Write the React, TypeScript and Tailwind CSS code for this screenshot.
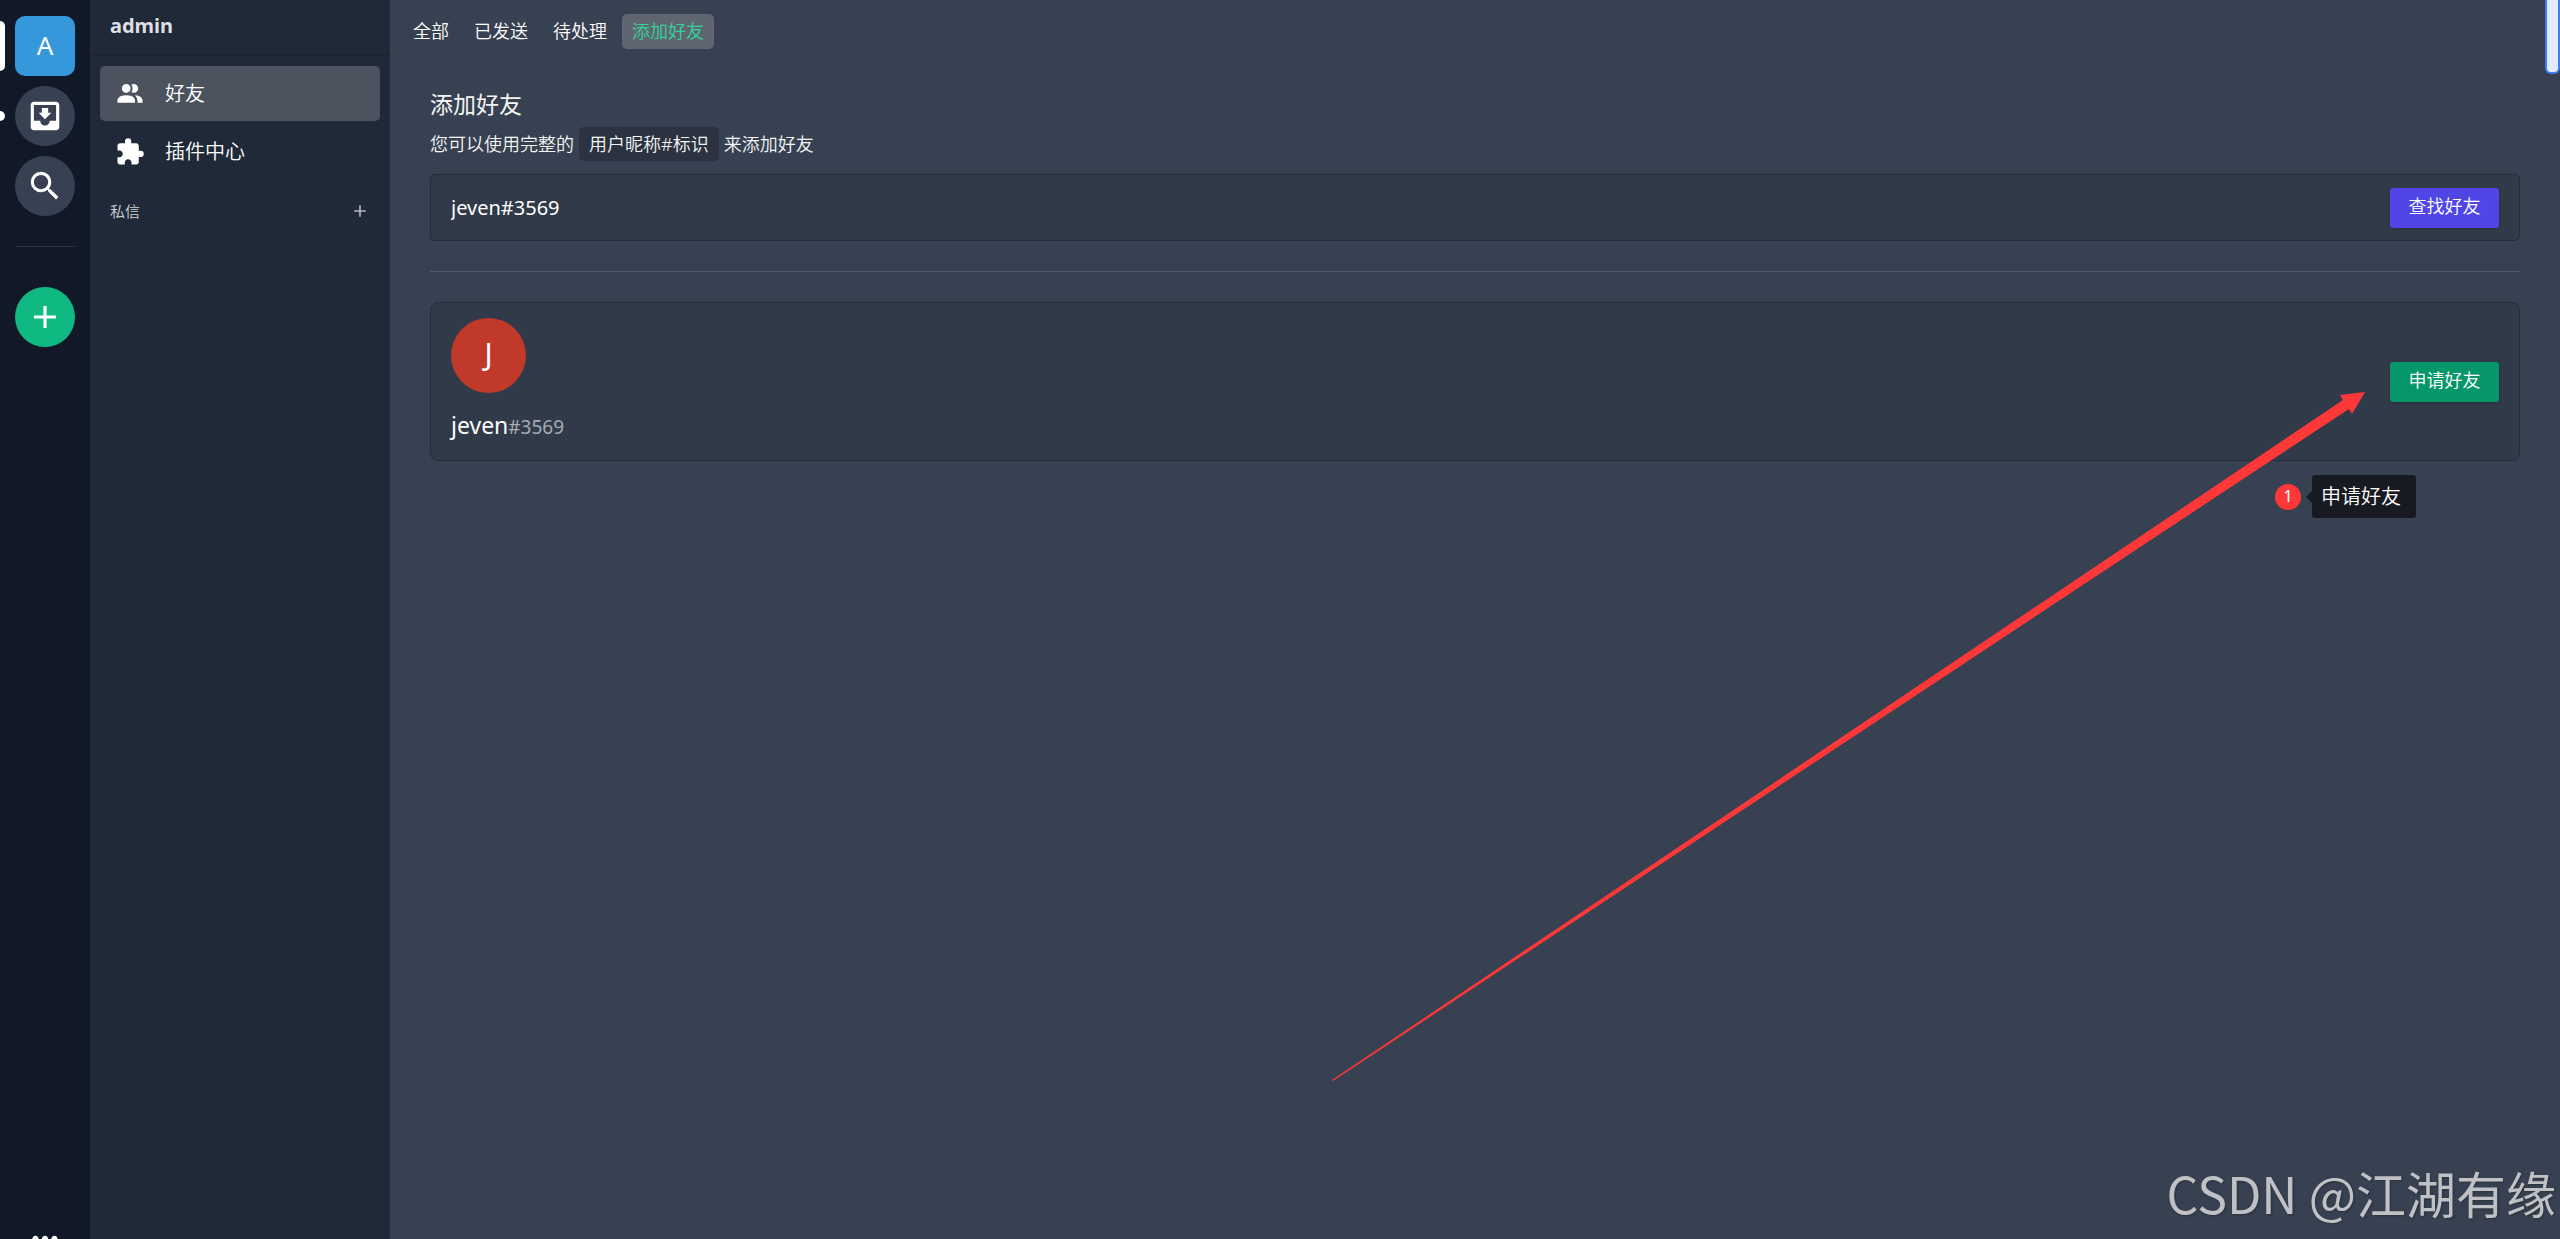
import type { ReactNode } from "react";
import { MdAdd, MdExtension, MdMoreHoriz, MdMoveToInbox } from "react-icons/md";

const font = 'font-["Noto_Sans","Noto_Sans_CJK_SC",sans-serif]';

function PeopleIcon() {
  return (
    <svg viewBox="0 0 24 24" className="size-[30px] shrink-0" fill="currentColor" aria-hidden="true">
      <path d="M16 17v2H2v-2s0-4 7-4 7 4 7 4m-3.5-9.5A3.5 3.5 0 1 0 9 11a3.5 3.5 0 0 0 3.5-3.5m3.44 5.5A5.32 5.32 0 0 1 18 17v2h4v-2s0-3.63-6.06-4M15 4a3.39 3.39 0 0 0-1.93.59 5 5 0 0 1 0 5.82A3.39 3.39 0 0 0 15 11a3.5 3.5 0 0 0 0-7z" />
    </svg>
  );
}

function SearchIcon() {
  return (
    <svg viewBox="0 0 24 24" className="size-[38px]" fill="currentColor" aria-hidden="true">
      <path d="M9.5 3A6.5 6.5 0 0 1 16 9.5c0 1.61-.59 3.09-1.56 4.23l.27.27h.79l5 5-1.5 1.5-5-5v-.79l-.27-.27A6.516 6.516 0 0 1 9.5 16 6.5 6.5 0 0 1 3 9.5 6.5 6.5 0 0 1 9.5 3m0 2C7 5 5 7 5 9.5S7 14 9.5 14 14 12 14 9.5 12 5 9.5 5z" />
    </svg>
  );
}

function RailButton({ label, className, marker, children }: { label: string; className: string; marker?: ReactNode; children: ReactNode }) {
  return (
    <div className="relative flex w-full shrink-0 justify-center">
      {marker}
      <button type="button" aria-label={label} className={`flex size-[60px] items-center justify-center text-white ${className}`}>
        {children}
      </button>
    </div>
  );
}

function Rail() {
  return (
    <nav className="flex w-[90px] shrink-0 flex-col items-center gap-2.5 bg-[#111827] pt-4">
      <RailButton
        label="admin"
        className="rounded-[10px] bg-[#3498db] pb-0.5 text-[26px]"
        marker={<span className="absolute left-0 top-[5px] h-[50px] w-[5px] rounded-r-[5px] bg-white" />}
      >
        A
      </RailButton>
      <RailButton
        label="收件箱"
        className="rounded-full bg-[#374151]"
        marker={<span className="absolute left-0 top-[25px] h-2.5 w-[5px] rounded-r-[5px] bg-white" />}
      >
        <MdMoveToInbox className="size-[38px]" />
      </RailButton>
      <RailButton label="搜索" className="rounded-full bg-[#374151]">
        <SearchIcon />
      </RailButton>
      <hr className="mt-5 mb-[30px] w-[60px] border-t border-[#2b3341]" />
      <RailButton label="添加" className="rounded-full bg-[#10b981]">
        <MdAdd className="size-[38px]" />
      </RailButton>
      <div className="mt-auto -mb-[30px] w-full">
        <RailButton label="更多" className="">
          <MdMoreHoriz className="size-[38px]" />
        </RailButton>
      </div>
    </nav>
  );
}

function Sidebar() {
  return (
    <aside className="flex w-[300px] shrink-0 flex-col bg-[#1f2937]">
      <h1 className="flex h-14 shrink-0 items-center border-b-2 border-[#1c2431] px-5 pb-0.5 text-xl font-bold text-[#dddfe2]">admin</h1>
      <div className="flex flex-col gap-[3px] p-2.5 text-xl font-[350] text-white">
        <a href="#friends" className="flex h-[55px] items-center gap-5 rounded-[5px] bg-[#4c535f] px-[15px]">
          <PeopleIcon />
          好友
        </a>
        <a href="#plugins" className="flex h-[55px] items-center gap-5 rounded-[5px] px-[15px]">
          <MdExtension className="size-[30px] shrink-0" />
          插件中心
        </a>
      </div>
      <div className="flex items-center justify-between pt-2.5 pr-5 pl-5 text-[15px] leading-6 font-[350] text-[#d2d4d7]">
        <span>私信</span>
        <button type="button" aria-label="新建私信" className="text-[#b2b5ba]">
          <MdAdd className="size-5" />
        </button>
      </div>
    </aside>
  );
}

const tabs = ["全部", "已发送", "待处理", "添加好友"];

function Tabs() {
  return (
    <div role="tablist" className="flex gap-[5px] px-[13px] pt-3.5 text-lg font-[350]">
      {tabs.map((tab, i) => {
        const active = i === tabs.length - 1;
        return (
          <button
            key={tab}
            type="button"
            role="tab"
            aria-selected={active}
            className={`h-[35px] rounded-[5px] px-2.5 pb-0.5 ${active ? "bg-[#5f6672] text-[#34d399]" : "text-white"}`}
          >
            {tab}
          </button>
        );
      })}
    </div>
  );
}

function Main() {
  return (
    <main className="flex min-w-0 flex-1 flex-col bg-[#374151] text-white">
      <Tabs />
      <section className="flex flex-col px-10 pt-10">
        <h2 className="text-[23px] leading-[30px] text-[#f4f5f6]">添加好友</h2>
        <p className="mt-2 flex items-center gap-[5px] text-lg leading-[34px] font-[350] text-[#f4f5f6]">
          <span>您可以使用完整的</span>
          <span className="rounded-[5px] bg-[#2c3340] px-2.5">用户昵称#标识</span>
          <span>来添加好友</span>
        </p>
        <div className="mt-[13px] flex h-[67px] items-center rounded-[5px] border border-[#242c38] bg-[#303a48] px-5">
          <input aria-label="用户昵称#标识" defaultValue="jeven#3569" className="min-w-0 flex-1 bg-transparent text-xl outline-none" />
          <button type="button" className="h-10 w-[109px] rounded-[3px] bg-[#4f46e5] pb-1 text-lg font-[350] shadow-sm">
            查找好友
          </button>
        </div>
        <hr className="my-[30px] border-t border-[#4f5866]" />
        <article className="flex items-center justify-between rounded-lg border border-[#242c38] bg-[#303a48] px-5 py-[15px]">
          <div>
            <div className="flex size-[75px] items-center justify-center rounded-full bg-[#c0392b] pb-1 text-[30px]">J</div>
            <div className="mt-[15px] text-[23px] leading-[35px]">
              jeven<span className="text-[19px] text-[#a7abb1]">#3569</span>
            </div>
          </div>
          <button type="button" className="h-10 w-[109px] rounded-[3px] bg-[#059669] pb-1 text-lg font-[350] shadow-sm">
            申请好友
          </button>
        </article>
      </section>
    </main>
  );
}

function Annotations() {
  return (
    <div className="pointer-events-none">
      <svg viewBox="0 0 1040 700" className="absolute top-[386px] right-[190px] h-[700px] w-[1040px]" aria-hidden="true">
        <path fill="#fe3838" d="M2 694 L1013 14 L1010 9 L1035 6 L1022 28 L1019 23 L910 95 L3 695 Z" />
      </svg>
      <div className="absolute top-[475px] right-36 flex items-center text-white">
        <span className="mr-[5px] flex size-[26px] items-center justify-center rounded-full bg-[#fe3838] pb-0.5 text-base">1</span>
        <svg viewBox="0 0 6 12" className="h-3 w-1.5" aria-hidden="true">
          <path d="M6 0 0 6l6 6z" fill="#171a21" />
        </svg>
        <span className="h-[43px] rounded-[3px] bg-[#171a21] pr-[15px] pl-[9px] text-xl leading-[43px] font-[350]">申请好友</span>
      </div>
      <div className="absolute top-0 right-0 h-[74px] w-[15px] rounded-b-md border-2 border-t-0 border-[#3b7ff0] bg-[#e3ecff]" />
      <div className='absolute right-1 bottom-3 font-["Noto_Sans_CJK_SC",sans-serif] text-[50px] leading-[70px] text-[#bfc1c5] [text-shadow:1px_1px_2px_#2b313b]'>
        CSDN @江湖有缘
      </div>
    </div>
  );
}

export default function App() {
  return (
    <div className={`relative flex h-screen overflow-hidden bg-[#374151] ${font}`}>
      <Rail />
      <Sidebar />
      <Main />
      <Annotations />
    </div>
  );
}
